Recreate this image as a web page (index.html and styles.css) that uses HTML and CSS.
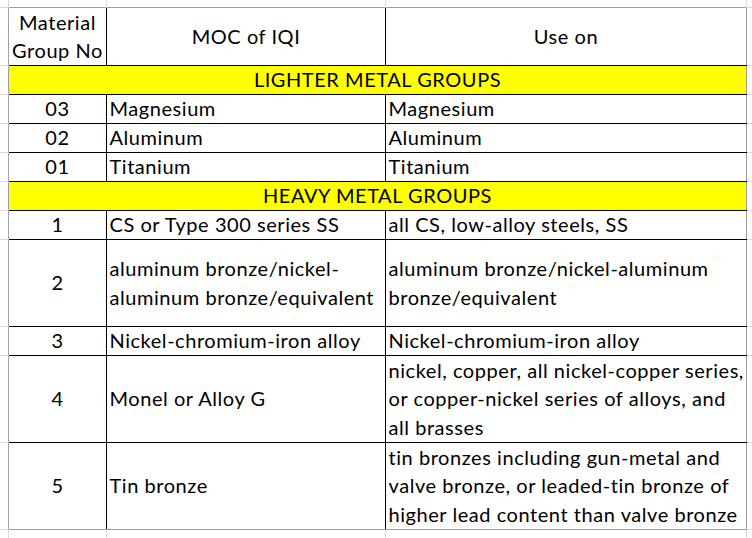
FILE: index.html
```html
<!DOCTYPE html>
<html>
<head>
<meta charset="utf-8">
<link rel="stylesheet" href="styles.css">
</head>
<body>
<table class="sheet">
  <colgroup>
    <col class="w-edge-l">
    <col class="w-c1">
    <col class="w-c2">
    <col class="w-c3">
    <col class="w-edge-r">
  </colgroup>
  <tr class="r-top">
    <td class="e-tl"></td>
    <td class="e-t"></td>
    <td class="e-t"></td>
    <td class="e-t"></td>
    <td class="e-tr"></td>
  </tr>
  <tr class="r-hdr">
    <td class="e-l"></td>
    <td class="c first top center">Material<br>Group No</td>
    <td class="c top center">MOC of IQI</td>
    <td class="c last top center">Use on</td>
    <td class="e-r"></td>
  </tr>
  <tr class="r-1">
    <td class="e-l"></td>
    <td class="c first last band" colspan="3">LIGHTER METAL GROUPS</td>
    <td class="e-r"></td>
  </tr>
  <tr class="r-1">
    <td class="e-l"></td>
    <td class="c first center">03</td>
    <td class="c">Magnesium</td>
    <td class="c last">Magnesium</td>
    <td class="e-r"></td>
  </tr>
  <tr class="r-1">
    <td class="e-l"></td>
    <td class="c first center">02</td>
    <td class="c">Aluminum</td>
    <td class="c last">Aluminum</td>
    <td class="e-r"></td>
  </tr>
  <tr class="r-1">
    <td class="e-l"></td>
    <td class="c first center">01</td>
    <td class="c">Titanium</td>
    <td class="c last">Titanium</td>
    <td class="e-r"></td>
  </tr>
  <tr class="r-1">
    <td class="e-l"></td>
    <td class="c first last band" colspan="3">HEAVY METAL GROUPS</td>
    <td class="e-r"></td>
  </tr>
  <tr class="r-1">
    <td class="e-l"></td>
    <td class="c first center">1</td>
    <td class="c">CS or Type 300 series SS</td>
    <td class="c last">all CS, low-alloy steels, SS</td>
    <td class="e-r"></td>
  </tr>
  <tr class="r-3">
    <td class="e-l"></td>
    <td class="c first center">2</td>
    <td class="c">aluminum bronze/nickel-<br>aluminum bronze/equivalent</td>
    <td class="c last">aluminum bronze/nickel-aluminum<br>bronze/equivalent</td>
    <td class="e-r"></td>
  </tr>
  <tr class="r-1">
    <td class="e-l"></td>
    <td class="c first center">3</td>
    <td class="c">Nickel-chromium-iron alloy</td>
    <td class="c last">Nickel-chromium-iron alloy</td>
    <td class="e-r"></td>
  </tr>
  <tr class="r-3">
    <td class="e-l"></td>
    <td class="c first center">4</td>
    <td class="c">Monel or Alloy G</td>
    <td class="c last">nickel, copper, all nickel-copper series,<br>or copper-nickel series of alloys, and<br>all brasses</td>
    <td class="e-r"></td>
  </tr>
  <tr class="r-3">
    <td class="e-l"></td>
    <td class="c first bottom center">5</td>
    <td class="c bottom">Tin bronze</td>
    <td class="c last bottom">tin bronzes including gun-metal and<br>valve bronze, or leaded-tin bronze of<br>higher lead content than valve bronze</td>
    <td class="e-r"></td>
  </tr>
  <tr class="r-bot">
    <td class="e-bl"></td>
    <td class="e-b"></td>
    <td class="e-b"></td>
    <td class="e-b"></td>
    <td class="e-br"></td>
  </tr>
</table>
</body>
</html>
```

FILE: styles.css
```css
html, body {
  margin: 0;
  padding: 0;
  background: #ffffff;
  overflow: hidden;
}

.sheet {
  border-collapse: collapse;
  table-layout: fixed;
  width: 752px;
  font-family: "Lato", "Liberation Sans", sans-serif;
  font-size: 20px;
  letter-spacing: 0.55px;
  color: #000000;
}

.w-edge-l { width: 8px; }
.w-c1 { width: 98px; }
.w-c2 { width: 279px; }
.w-c3 { width: 361px; }
.w-edge-r { width: 6px; }

td {
  padding: 0;
}

.r-top { height: 7px; }
.r-hdr { height: 58px; }
.r-1 { height: 29px; }
.r-3 { height: 87px; }
.r-bot { height: 9px; }

/* grid lines outside the table */
.e-tl {
  border-right: 1px solid #dadada;
  border-bottom: 1px solid #dadada;
}
.e-t {
  border-right: 1px solid #dadada;
}
.e-tr {
  border-bottom: 1px solid #dadada;
}
.e-l, .e-r {
  border-bottom: 1px solid #dadada;
}
.e-bl {
  border-right: 1px solid #dadada;
}
.e-b {
  border-right: 1px solid #dadada;
}

/* table cells */
.c {
  border: 1px solid #000000;
  padding: 0 2px 0 3px;
  line-height: 27px;
  vertical-align: middle;
  white-space: nowrap;
  text-align: left;
}
.r-hdr .c,
.r-3 .c {
  line-height: 28.5px;
}
.c.first { border-left-color: #9e9e9e; }
.c.last { border-right-color: #9e9e9e; }
.c.top { border-top-color: #9e9e9e; }
.c.bottom { border-bottom-color: #9e9e9e; }
.c.center { text-align: center; }

.band {
  background: #ffff00;
  text-align: center;
}
```
